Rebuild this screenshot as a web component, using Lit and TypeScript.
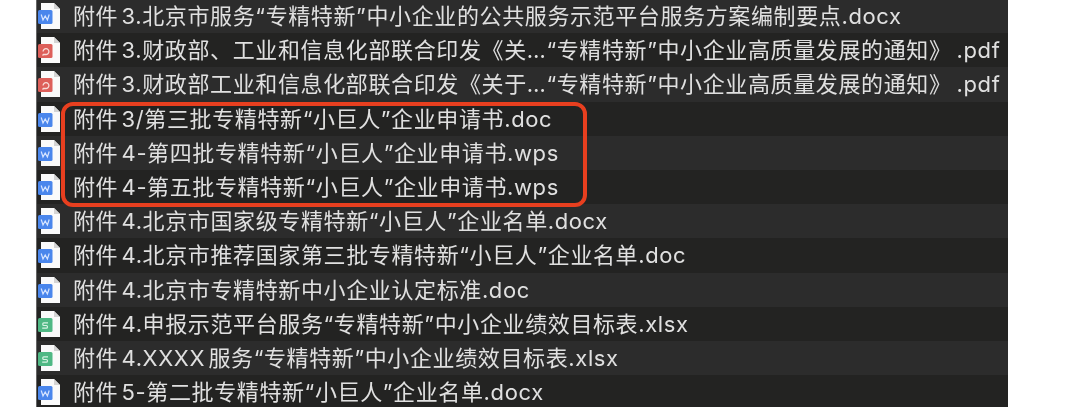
import { LitElement, html, svg, css } from "lit";
import { customElement } from "lit/decorators.js";

type Kind = "w" | "p" | "s";
const ROWS: [Kind, string][] = [
  ["w", "附件 3.北京市服务“专精特新”中小企业的公共服务示范平台服务方案编制要点.docx"],
  ["p", "附件 3.财政部、工业和信息化部联合印发《关…“专精特新”中小企业高质量发展的通知》.pdf"],
  ["p", "附件 3.财政部工业和信息化部联合印发《关于…“专精特新”中小企业高质量发展的通知》.pdf"],
  ["w", "附件 3/第三批专精特新“小巨人”企业申请书.doc"],
  ["w", "附件 4-第四批专精特新“小巨人”企业申请书.wps"],
  ["w", "附件 4-第五批专精特新“小巨人”企业申请书.wps"],
  ["w", "附件 4.北京市国家级专精特新“小巨人”企业名单.docx"],
  ["w", "附件 4.北京市推荐国家第三批专精特新“小巨人”企业名单.doc"],
  ["w", "附件 4.北京市专精特新中小企业认定标准.doc"],
  ["s", "附件 4.申报示范平台服务“专精特新”中小企业绩效目标表.xlsx"],
  ["s", "附件 4.XXXX 服务“专精特新”中小企业绩效目标表.xlsx"],
  ["w", "附件 5-第二批专精特新“小巨人”企业名单.docx"],
];

const glyph = (k: Kind) => {
  if (k === "w") return svg`<path d="M3.2 4.5 5 10 7.2 6 9.4 10 11.2 4.5" fill="none" stroke="#d6e4ff" stroke-width="1.2"/>`;
  if (k === "p") return svg`<path d="M4.5 11.5 5.5 10.5H7.8a2.9 2.9 0 1 0-2.7-2.9" fill="none" stroke="#f8dcd9" stroke-width="1.3"/>`;
  return svg`<path d="M10 4.8H5.8a1 1 0 0 0-1 1v.7a1 1 0 0 0 1 1h2.6a1 1 0 0 1 1 1v.7a1 1 0 0 1-1 1H4.2" fill="none" stroke="#d8f3e4" stroke-width="1.2"/>`;
};

const BADGE: Record<Kind, string> = { w: "#4a86ec", p: "#dd5f5a", s: "#4fb884" };

const label = (t: string) => {
  const i = t.indexOf("》.");
  if (i < 0) return t;
  return html`${t.slice(0, i + 1)}<span class="ext">${t.slice(i + 1)}</span>`;
};

@customElement("app-root")
export class AppRoot extends LitElement {
  static styles = css`
    :host { display: block; height: 407px; overflow: hidden; background: #fff; position: relative; }
    .panel { width: 972px; margin: -1px 0 0 36px; background: #2b2b2b; border-left: 1px solid #666; box-sizing: border-box; }
    .row { height: 34.2px; display: flex; align-items: center; gap: 13px; padding-left: 1px; background: #2c2c2c; }
    .row:nth-child(even) { background: #232322; }
    svg { flex: none; display: block; }
    .name { font: 22px/1 Inter, "Noto Sans CJK SC", sans-serif; letter-spacing: 0.62px; word-spacing: -3.5px; color: #e0e0e0; white-space: nowrap; filter: blur(0.4px); }
    .ext { margin-left: 5px; }
    .mark { position: absolute; left: 61px; top: 101.5px; width: 526px; height: 105px; box-sizing: border-box;
      border: 4.5px solid #e83f1f; border-radius: 12px; }
  `;

  render() {
    return html`
      <div class="panel">
        ${ROWS.map(([k, t]) => html`
          <div class="row">
            <svg width="22" height="26" viewBox="0 0 22 26">
              <path d="M3 0h13l6 6v20H3z" fill="#fafafa"/>
              <path d="M16 0l6 6h-6z" fill="#d4d4d4"/>
              <rect x="0" y="7" width="14.5" height="14" rx="1.5" fill="${BADGE[k]}"/>
              <g transform="translate(0 7)">${glyph(k)}</g>
            </svg>
            <span class="name">${label(t)}</span>
          </div>`)}
      </div>
      <div class="mark"></div>
    `;
  }
}
